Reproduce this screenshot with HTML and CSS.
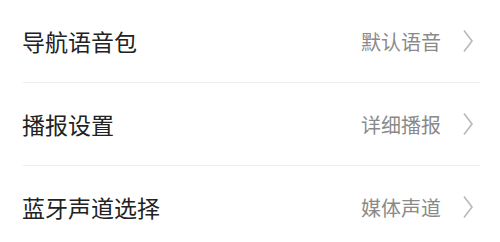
FILE: index.html
```html
<!DOCTYPE html>
<html lang="zh-CN">
<head>
<meta charset="utf-8">
<link rel="stylesheet" href="styles.css">
</head>
<body>
<ul class="settings">
  <li class="row">
    <span class="title">导航语音包</span>
    <span class="value">默认语音</span>
    <svg class="chev" viewBox="0 0 12 24" width="12" height="24"><polyline points="2,1.5 10,12 2,22.5"/></svg>
  </li>
  <li class="row">
    <span class="title">播报设置</span>
    <span class="value">详细播报</span>
    <svg class="chev" viewBox="0 0 12 24" width="12" height="24"><polyline points="2,1.5 10,12 2,22.5"/></svg>
  </li>
  <li class="row">
    <span class="title">蓝牙声道选择</span>
    <span class="value">媒体声道</span>
    <svg class="chev" viewBox="0 0 12 24" width="12" height="24"><polyline points="2,1.5 10,12 2,22.5"/></svg>
  </li>
</ul>
</body>
</html>
```
FILE: styles.css
```css
html, body {
  margin: 0;
  padding: 0;
  background: #ffffff;
}
body {
  width: 500px;
  height: 242px;
  overflow: hidden;
  font-family: "Noto Sans CJK SC", "Noto Sans", sans-serif;
}
.settings {
  list-style: none;
  margin: 0;
  padding: 0 20px 0 23px;
}
.row {
  display: flex;
  align-items: center;
  height: 82px;
  border-bottom: 1px solid #ececec;
}
.title {
  flex: 1;
  font-size: 23px;
  color: #222222;
  margin-left: -1px;
}
.value {
  font-size: 20px;
  color: #8a8a8a;
  margin-right: 21px;
}
.chev {
  fill: none;
  stroke: #b8b8b8;
  stroke-width: 1.6;
  margin-right: 6px;
}
```
